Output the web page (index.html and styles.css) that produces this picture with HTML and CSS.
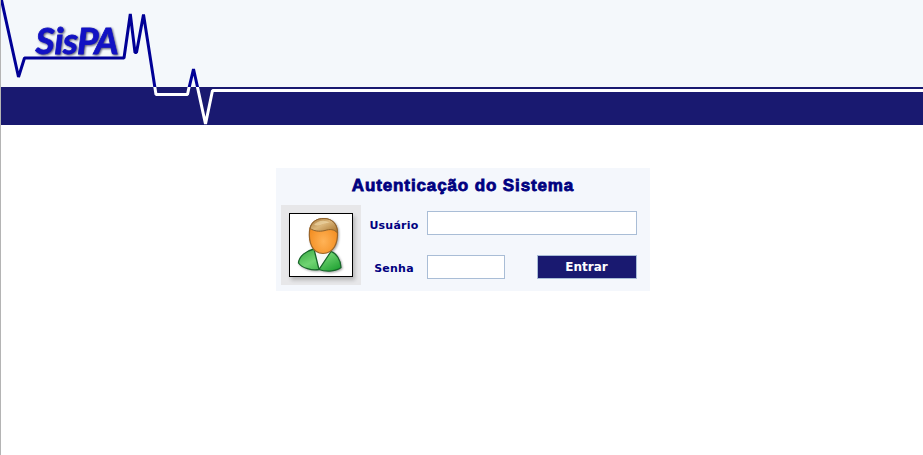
FILE: index.html
```html
<!DOCTYPE html>
<html lang="pt-BR">
<head>
<meta charset="utf-8">
<title>SisPA</title>
<link rel="stylesheet" href="styles.css">
</head>
<body>
<header class="header">
  <svg class="pulse" width="922" height="125" viewBox="1 0 922 125" role="img" aria-label="SisPA">
    <defs>
      <clipPath id="above"><rect x="0" y="0" width="923" height="87"/></clipPath>
      <clipPath id="below"><rect x="0" y="87" width="923" height="38"/></clipPath>
    </defs>
    <path class="line" clip-path="url(#above)" d="M1.5 0L18.5 77L24.5 58H124L130.3 14L135 52.500H136.500L143.500 14.500L156 94.500H187.500L193.500 69L205.500 123L212.500 90.500H923"/>
    <path class="line line-light" clip-path="url(#below)" d="M154.500 85L156 94.500H187.500L189.500 85M197 85L205.500 124L212.500 90.500H923"/>
    <text class="logo" y="53.500" x="35.500 54.500 63 77 94.500">SisPA</text>
  </svg>
</header>
<main class="login">
  <h1 class="title"><span>Autenticação do Sistema</span></h1>
  <form class="form">
    <div class="avatar">
      <svg width="62" height="62" viewBox="0 0 62 62" aria-hidden="true">
        <defs>
          <radialGradient id="face" cx=".5" cy=".65" r=".6"><stop offset="0" stop-color="#ffb357"/><stop offset="1" stop-color="#f28a1c"/></radialGradient>
          <linearGradient id="coat" x1="0" y1="0" x2="1" y2="1"><stop offset="0" stop-color="#35a63f"/><stop offset=".45" stop-color="#70d472"/><stop offset="1" stop-color="#169b2b"/></linearGradient>
          <linearGradient id="hair" x1="0" y1="0" x2="1" y2="1"><stop offset="0" stop-color="#a8793a"/><stop offset=".45" stop-color="#dbb67a"/><stop offset="1" stop-color="#a36d26"/></linearGradient>
        </defs>
        <g class="person">
          <path fill="#f7f9f7" d="M23 34L29 55L41 37Z"/>
          <path fill="url(#coat)" stroke="#17662a" stroke-width="1.300" stroke-linejoin="round" d="M24 35C16 37 9 42 8.500 49C12 54 22 57 29 55.500ZM41 37.500L29 55.500C37 58.500 47 57 51 53.500C51 46 46 39 41 37.500Z"/>
          <path fill="url(#face)" stroke="#9b6428" stroke-width="1.200" d="M19.500 17C18.500 28 22 39 33 39.500C44 39 48 29 47.500 18C47 9 41 4.500 34 4.500C26 4.500 20 9 19.500 17Z"/>
          <path fill="url(#hair)" stroke="#8d622d" stroke-width="1" d="M20 14.500C22 7 27 4.500 34 4.500C42 4.500 47.500 10 47.500 19C44 15 40 15 35 16.500C29 18 24 17 20 14.500Z"/>
          <path fill="#f0d8a9" opacity=".65" d="M24 11C27 7 34 5 40 9C34 8 31 13 24 11Z"/>
        </g>
      </svg>
    </div>
    <div class="fields">
      <label class="label" for="user">Usuário</label>
      <input class="input" id="user" type="text">
      <label class="label label-pass" for="pass">Senha</label>
      <div class="actions">
        <input class="input input-pass" id="pass" type="password">
        <button class="button" type="button">Entrar</button>
      </div>
    </div>
  </form>
</main>
</body>
</html>
```
FILE: styles.css
```css
* { box-sizing: border-box; }
html { background: #fff; }
body {
  margin: 0;
  min-height: 100vh;
  border-left: 1px solid #b4b4b4;
  font-family: "DejaVu Sans", sans-serif;
}
.header {
  height: 125px;
  overflow: hidden;
  background: linear-gradient(#f4f8fb 87px, #191970 87px);
}
.pulse { display: block; }
.line {
  fill: none;
  stroke: #000096;
  stroke-width: 3;
  stroke-linejoin: bevel;
}
.line-light { stroke: #fff; }
.logo {
  font: italic 700 37px Lato, sans-serif;
  fill: #1212c4;
  stroke: #1212c4;
  stroke-width: .8;
  filter: drop-shadow(1.5px 1.5px 1px rgba(20, 20, 60, .75));
}
.login {
  width: 374px;
  height: 123px;
  margin: 43px 0 0 275px;
  background: #f4f7fc;
}
.title {
  display: flex;
  justify-content: center;
  align-items: center;
  height: 37px;
  margin: 0;
  padding: 0 0 2px;
  font: 700 17px "Liberation Sans", sans-serif;
  letter-spacing: .88px;
  white-space: nowrap;
  color: #000080;
  -webkit-text-stroke: .8px #000080;
}
.form { display: flex; padding-left: 5px; }
.avatar {
  flex: none;
  width: 80px;
  height: 80px;
  padding: 8px;
  background: #e7e7e9;
}
.avatar svg {
  display: block;
  box-sizing: content-box;
  border: 1px solid #000;
  background: #fff;
  box-shadow: 2px 3px 4px rgba(0, 0, 0, .22);
}
.person { filter: drop-shadow(1px 1px 1px rgba(0, 0, 0, .35)); }
.fields {
  display: grid;
  grid-template-columns: 50px 210px;
  grid-template-rows: 24px 24px;
  gap: 20px 8px;
  padding: 6px 0 0 8px;
  align-items: center;
}
.label {
  padding-top: 4px;
  font-size: 11px;
  font-weight: 700;
  letter-spacing: .25px;
  text-align: center;
  color: #000080;
}
.label-pass { padding-top: 2px; }
.input {
  width: 210px;
  height: 24px;
  padding: 0 4px;
  border: 1px solid #a9bdd6;
  background: #fff;
}
.input-pass { width: 78px; }
.actions { display: flex; justify-content: space-between; }
.button {
  width: 100px;
  height: 24px;
  padding: 0 1px 0 0;
  border: 1px solid #a9bdd6;
  background: #191970;
  color: #fff;
  font: 700 12px "DejaVu Sans", sans-serif;
}
```
